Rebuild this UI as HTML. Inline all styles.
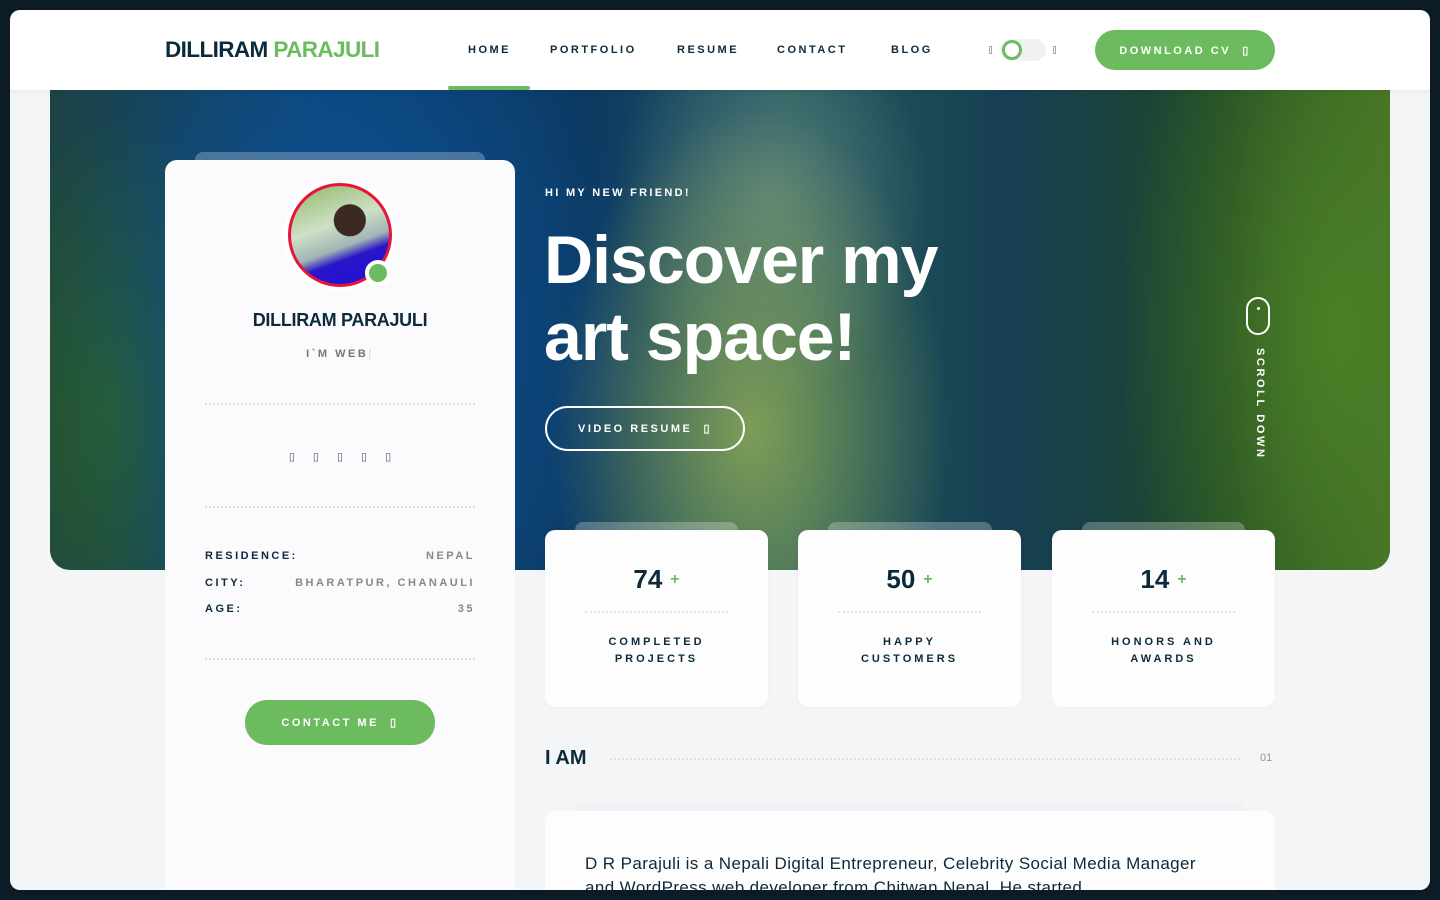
<!DOCTYPE html>
<html><head><meta charset="utf-8"><style>
*{margin:0;padding:0;box-sizing:border-box}
body{width:1440px;height:900px;overflow:hidden;background:#0b1c26;font-family:"Liberation Sans",sans-serif;position:relative}
.frame{position:absolute;left:10px;top:10px;width:1420px;height:880px;background:#f4f5f7;border-radius:10px;overflow:hidden}
.hdr{position:absolute;left:0;top:0;width:1420px;height:80px;background:#fff;border-radius:10px 10px 0 0;z-index:5;box-shadow:0 2px 6px rgba(0,0,0,.05)}
.logo{position:absolute;left:155px;top:27px;font-weight:bold;font-size:22.5px;color:#0b2a3c;letter-spacing:-0.6px}
.logo span{color:#6cbb5f}
.nav a{position:absolute;top:34px;font-size:11px;font-weight:bold;letter-spacing:2.5px;color:#0b2a3c}
.uline{position:absolute;left:438px;top:76px;width:82px;height:4px;background:#6cbb5f;border-radius:2px}
.tog{position:absolute;left:990px;top:29px;width:46px;height:22px;border-radius:11px;background:#f0f1f3}
.tog:after{content:"";position:absolute;left:2px;top:1px;width:20px;height:20px;border-radius:50%;border:3px solid #6cbb5f;background:#fff;box-sizing:border-box}
.tb{position:absolute;top:36px;width:3px;height:8px;border:1px solid #aaa}
.btn{position:absolute;background:#6cbb5f;color:#fff;font-weight:bold;font-size:11px;letter-spacing:2.5px;border-radius:22px;display:flex;align-items:center;justify-content:center}
.hero{position:absolute;left:40px;top:80px;width:1340px;height:480px;border-radius:0 0 20px 20px;overflow:hidden;
background:
radial-gradient(ellipse 200px 320px at 700px 340px,rgba(150,175,85,.8),transparent),
radial-gradient(ellipse 160px 200px at 720px 110px,rgba(120,150,140,.6),transparent),
radial-gradient(ellipse 220px 480px at 1290px 240px,#4c7f26,transparent),
radial-gradient(ellipse 300px 400px at 300px 250px,#0d5296,transparent),
radial-gradient(ellipse 140px 300px at 60px 320px,#2a5e28,transparent),
linear-gradient(90deg,#1c4346 0%,#0c4479 20%,#0b3961 40%,#23595e 55%,#163f52 72%,#1f4627 88%,#436f24 100%)}
.card{position:absolute;left:155px;top:150px;width:350px;height:760px;background:#fbfbfd;border-radius:12px;z-index:3}
.ghost{position:absolute;background:rgba(255,255,255,.25);border-radius:8px 8px 0 0;height:10px}
.av{position:absolute;left:123px;top:23px;width:104px;height:104px;border-radius:50%;border:3px solid #e8133b;background:radial-gradient(circle at 60% 35%,#3a2a22 0 18%,transparent 19%),linear-gradient(160deg,#8fb86a 0%,#cfe0c5 40%,#a0b4b4 60%,#2a16c8 70%,#1c0fd8 100%);box-shadow:0 0 0 4px #fff}
.dot{position:absolute;left:200px;top:100px;width:26px;height:26px;border-radius:50%;background:#6cbb5f;border:4px solid #fff}
.dline{position:absolute;left:40px;width:270px;border-top:2px dotted #dde0e4}
.row{position:absolute;left:40px;width:270px;font-size:11px;font-weight:bold;letter-spacing:2.5px;display:flex;justify-content:space-between}
.row b{color:#0b2a3c}.row span{color:#888}
.stat{position:absolute;top:520px;width:223px;height:177px;background:#fdfdfe;border-radius:10px;text-align:center;z-index:3;box-shadow:0 1px 4px rgba(0,0,0,.04)}
.stat .n{position:absolute;top:34px;width:100%;font-size:26px;font-weight:bold;color:#0b2a3c}
.stat .n i{font-style:normal;color:#6cbb5f;font-size:16px;vertical-align:4px;margin-left:8px}
.stat .l{position:absolute;top:104px;width:100%;font-size:11px;font-weight:bold;letter-spacing:3px;line-height:17px;color:#0b2a3c}
.stat .d{position:absolute;left:40px;right:40px;top:81px;border-top:2px dotted #e2e4e8}
</style></head><body>
<div class="frame">
<div class="hdr">
<div class="logo">DILLIRAM <span>PARAJULI</span></div>
<div class="nav"><a style="left:458px">HOME</a><a style="left:540px">PORTFOLIO</a><a style="left:667px">RESUME</a><a style="left:767px">CONTACT</a><a style="left:881px">BLOG</a></div>
<div class="uline"></div>
<div class="tb" style="left:979px"></div><div class="tog"></div><div class="tb" style="left:1043px"></div>
<div class="btn" style="left:1085px;top:20px;width:180px;height:40px">DOWNLOAD CV &nbsp;▯</div>
</div>
<div class="hero">
<div class="ghost" style="left:145px;top:62px;width:290px"></div>
<div style="position:absolute;left:495px;top:97px;color:#fff;font-size:11px;font-weight:bold;letter-spacing:2.3px">HI MY NEW FRIEND!</div>
<div style="position:absolute;left:494px;top:132px;color:#fff;font-size:68px;font-weight:bold;line-height:77px;letter-spacing:-1px">Discover my<br>art space!</div>
<div style="position:absolute;left:495px;top:316px;width:200px;height:45px;border:2px solid #fff;border-radius:23px;color:#fff;font-size:11px;font-weight:bold;letter-spacing:2.5px;display:flex;align-items:center;justify-content:center">VIDEO RESUME &nbsp;▯</div>
<div style="position:absolute;left:1196px;top:207px;width:24px;height:38px;border:2px solid #fff;border-radius:12px"><div style="position:absolute;left:9px;top:8px;width:3px;height:3px;background:#fff;border-radius:50%"></div></div>
<div style="position:absolute;left:1216px;top:258px;transform-origin:0 0;transform:rotate(90deg);color:#fff;font-size:11px;font-weight:bold;letter-spacing:2.6px;white-space:nowrap">SCROLL DOWN</div>
<div class="ghost" style="left:525px;top:432px;width:163px"></div>
<div class="ghost" style="left:778px;top:432px;width:164px"></div>
<div class="ghost" style="left:1032px;top:432px;width:163px"></div>
</div>
<div class="card">
<div class="av"></div><div class="dot"></div>
<div style="position:absolute;top:150px;width:100%;text-align:center;font-size:18px;font-weight:bold;color:#0b2a3c;letter-spacing:-0.3px">DILLIRAM PARAJULI</div>
<div style="position:absolute;top:188px;width:100%;text-align:center;font-size:11px;font-weight:bold;color:#777;letter-spacing:2.5px">I`M WEB<span style="color:#ddd">|</span></div>
<div class="dline" style="top:243px"></div>
<div style="position:absolute;top:290px;width:100%;text-align:center;font-size:11px;color:#556;letter-spacing:18px;padding-left:18px">▯▯▯▯▯</div>
<div class="dline" style="top:346px"></div>
<div class="row" style="top:390px"><b>RESIDENCE:</b><span>NEPAL</span></div>
<div class="row" style="top:417px"><b>CITY:</b><span>BHARATPUR, CHANAULI</span></div>
<div class="row" style="top:443px"><b>AGE:</b><span>35</span></div>
<div class="dline" style="top:498px"></div>
<div class="btn" style="left:80px;top:540px;width:190px;height:45px">CONTACT ME &nbsp;▯</div>
</div>
<div class="stat" style="left:535px"><div class="n">74<i>+</i></div><div class="d"></div><div class="l">COMPLETED<br>PROJECTS</div></div>
<div class="stat" style="left:788px"><div class="n">50<i>+</i></div><div class="d"></div><div class="l">HAPPY<br>CUSTOMERS</div></div>
<div class="stat" style="left:1042px"><div class="n">14<i>+</i></div><div class="d"></div><div class="l">HONORS AND<br>AWARDS</div></div>
<div style="position:absolute;left:535px;top:737px;font-size:20px;font-weight:bold;color:#0b2a3c">I AM</div>
<div style="position:absolute;left:600px;top:748px;width:630px;border-top:2px dotted #e0e2e6"></div>
<div style="position:absolute;left:1250px;top:742px;font-size:11px;color:#999">01</div>
<div style="position:absolute;left:565px;top:793px;width:670px;height:10px;background:#f0f1f4;border-radius:8px 8px 0 0"></div>
<div style="position:absolute;left:535px;top:801px;width:730px;height:100px;background:#fdfdfe;border-radius:10px">
<div style="position:absolute;left:40px;top:41px;width:640px;font-size:17px;line-height:24px;color:#0b2a3c;letter-spacing:0.4px">D R Parajuli is a Nepali Digital Entrepreneur, Celebrity Social Media Manager and WordPress web developer from Chitwan Nepal. He started</div>
</div>
</div>
</body></html>
